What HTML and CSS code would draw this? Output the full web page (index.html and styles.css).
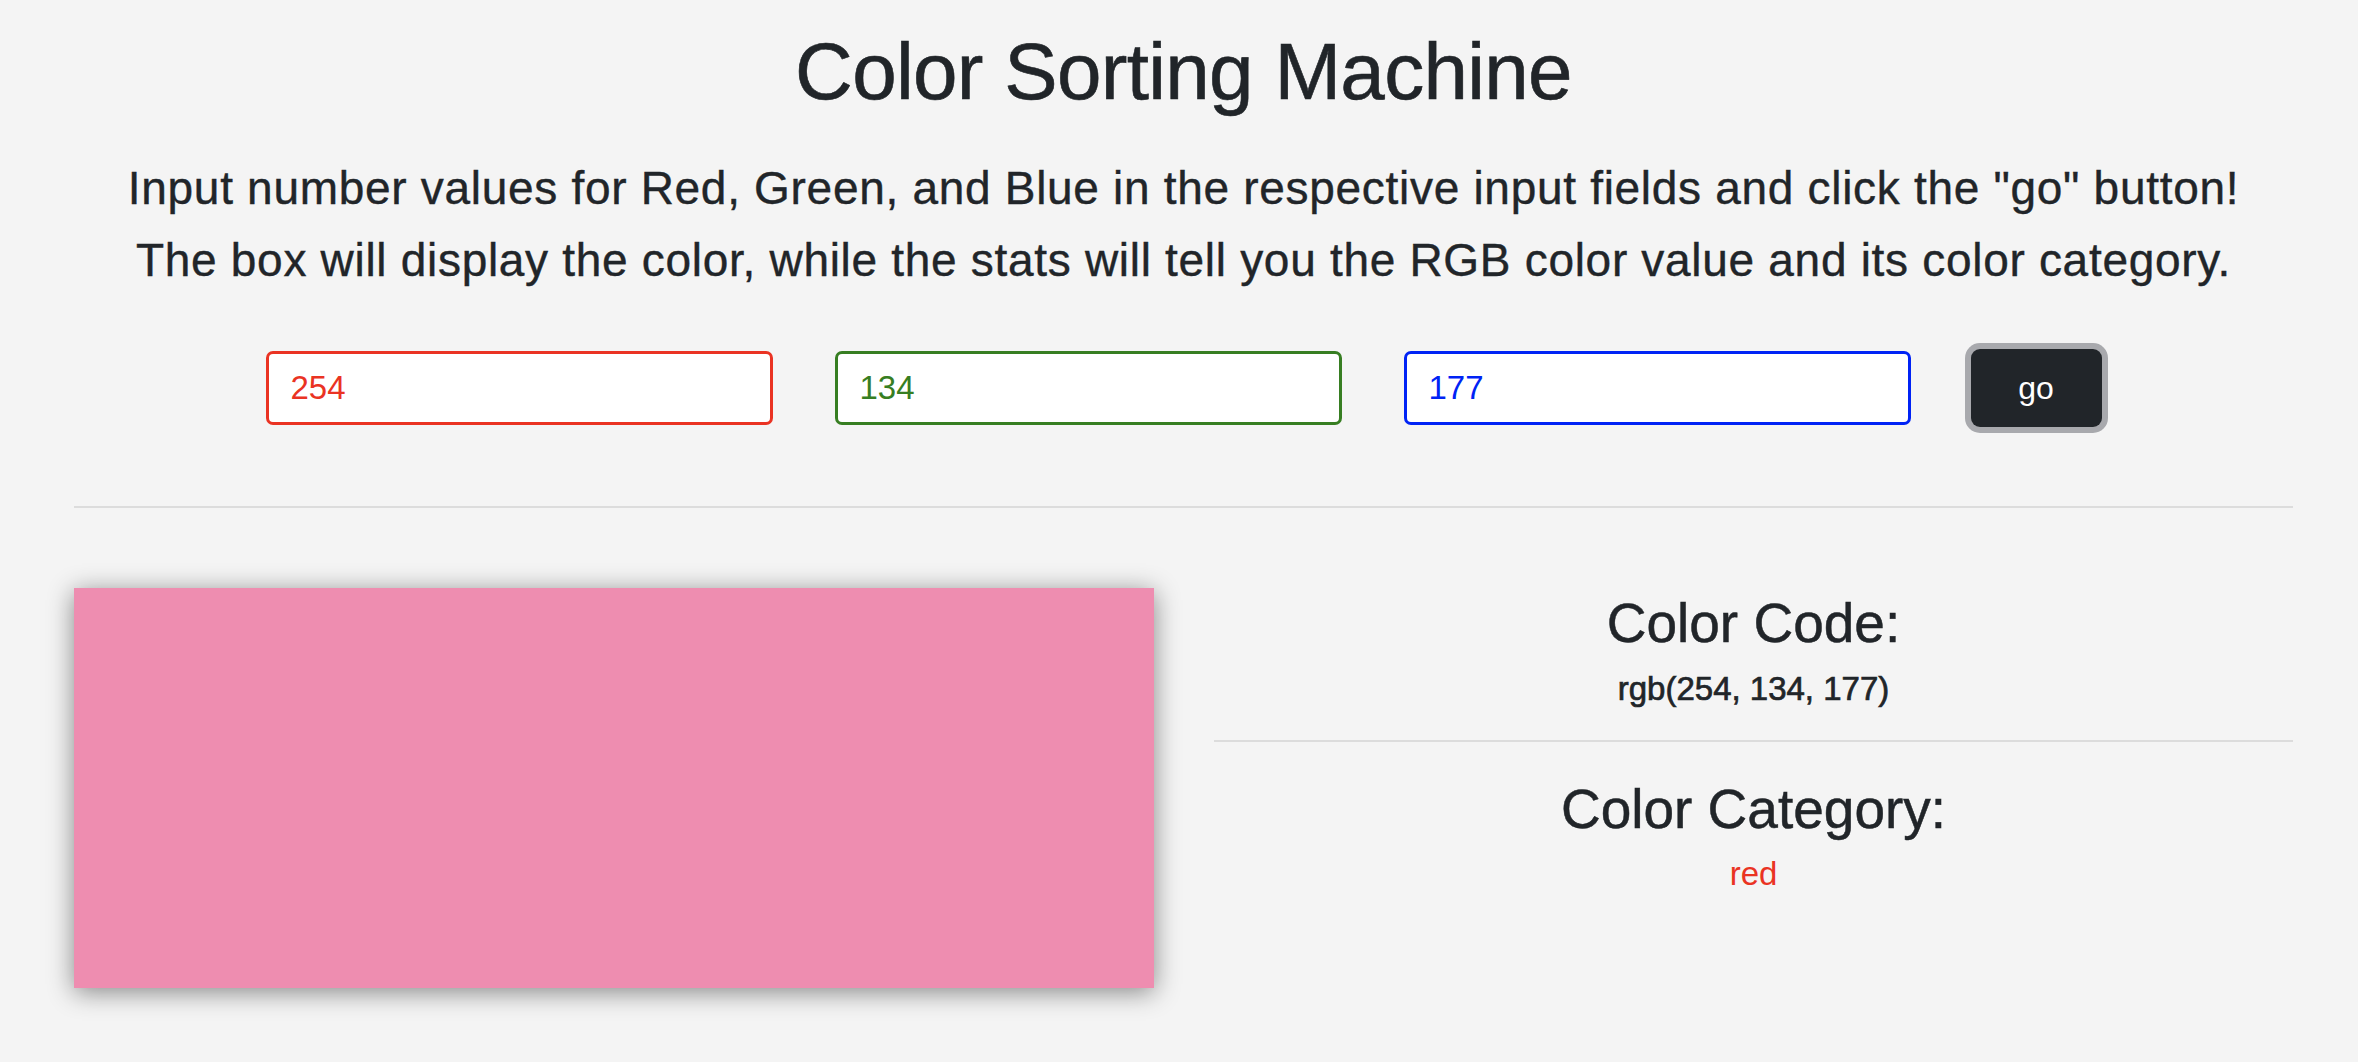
FILE: index.html
```html
<!DOCTYPE html>
<html lang="en">
<head>
<meta charset="utf-8">
<title>Color Sorting Machine</title>
<link rel="stylesheet" href="styles.css">
</head>
<body>
<main class="page">
  <h1 class="title">Color Sorting Machine</h1>
  <div class="intro">
    <p class="intro-line">Input number values for Red, Green, and Blue in the respective input fields and click the "go" button!</p>
    <p class="intro-line">The box will display the color, while the stats will tell you the RGB color value and its color category.</p>
  </div>
  <div class="controls">
    <input class="field field-red" type="text" value="254">
    <input class="field field-green" type="text" value="134">
    <input class="field field-blue" type="text" value="177">
    <button class="go" type="button">go</button>
  </div>
  <hr class="rule">
  <section class="result">
    <div class="swatch"></div>
    <div class="stats">
      <h2 class="stat-title">Color Code:</h2>
      <p class="stat-value stat-code">rgb(254, 134, 177)</p>
      <hr class="stat-rule">
      <h2 class="stat-title stat-title-second">Color Category:</h2>
      <p class="stat-value stat-red">red</p>
    </div>
  </section>
</main>
</body>
</html>
```

FILE: styles.css
```css
html, body {
  margin: 0;
  padding: 0;
  background: #f4f4f4;
}

body {
  font-family: "Liberation Sans", Arial, sans-serif;
  color: #212529;
}

.page {
  padding: 24px 65px 40px 74px;
}

.title {
  margin: 0;
  font-size: 80px;
  line-height: 96px;
  font-weight: 400;
  letter-spacing: -0.7px;
  text-align: center;
  -webkit-text-stroke: 0.6px currentColor;
}

.intro {
  margin-top: 32px;
}

.intro-line {
  margin: 0;
  font-size: 46px;
  line-height: 72px;
  letter-spacing: 0.7px;
  text-align: center;
  -webkit-text-stroke: 0.4px currentColor;
}

.controls {
  margin-top: 53px;
  display: flex;
  justify-content: center;
  align-items: center;
  gap: 62px;
  height: 78px;
}

.field {
  box-sizing: border-box;
  width: 507px;
  height: 74px;
  border: 3px solid;
  border-radius: 7px;
  background: #ffffff;
  padding: 0 22px;
  font-family: "Liberation Sans", Arial, sans-serif;
  font-size: 33px;
  outline: none;
}

.field-red {
  border-color: #ea3323;
  color: #ea3323;
}

.field-green {
  border-color: #377e22;
  color: #377e22;
}

.field-blue {
  border-color: #0023f5;
  color: #0023f5;
}

.go {
  box-sizing: border-box;
  width: 131px;
  height: 78px;
  margin-left: -2px;
  border: none;
  border-radius: 9px;
  background: #212529;
  color: #ffffff;
  font-family: "Liberation Sans", Arial, sans-serif;
  font-size: 32px;
  box-shadow: 0 0 0 6px #a8a9ad;
}

.rule {
  margin: 79px 0 0 0;
  border: none;
  border-top: 2px solid #dcdcdc;
  height: 0;
}

.result {
  margin-top: 80px;
  display: grid;
  grid-template-columns: 1080px 1fr;
  gap: 60px;
  align-items: start;
}

.swatch {
  height: 400px;
  background: #ee8db0;
  box-shadow: 0 4px 24px rgba(0, 0, 0, 0.45);
}

.stats {
  padding-top: 2px;
  text-align: center;
}

.stat-title {
  margin: 0;
  font-size: 55px;
  line-height: 66px;
  font-weight: 400;
  -webkit-text-stroke: 0.5px currentColor;
}

.stat-title-second {
  margin-top: 34px;
}

.stat-value {
  margin: 13px 0 0 0;
  font-size: 33px;
  line-height: 40px;
}

.stat-code {
  -webkit-text-stroke: 0.7px currentColor;
}

.stat-rule {
  margin: 31px 0 0 0;
  border: none;
  border-top: 2px solid #dcdcdc;
  height: 0;
}

.stat-red {
  margin-top: 12px;
  color: #ea3323;
}
```
